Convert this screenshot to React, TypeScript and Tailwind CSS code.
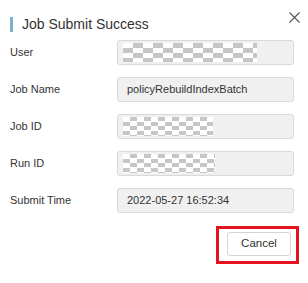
import type { ReactNode } from 'react';

interface FieldProps {
    label: string;
    children?: ReactNode;
}

const Field = ({ label, children }: FieldProps) => (
    <div className="flex items-center h-[25px]">
        <div className="w-[107px] text-[11px] text-[#333]">{label}</div>
        <div className="flex items-center w-[177px] h-[25px] border border-[#d9d9d9] rounded-[3px] bg-[#f0f0f0]">
            {children}
        </div>
    </div>
);

// redacted value, shown as a grey mosaic
const Mosaic = ({ width, cell }: { width: string; cell: string }) => (
    <div
        className={`ml-[5px] h-[19px] bg-[repeating-conic-gradient(#c6c6c6_0_25%,#ffffff_0_50%)] ${width} ${cell}`}
    />
);

const Value = ({ text }: { text: string }) => (
    <span className="pl-[9px] text-[11px] text-[#333]">{text}</span>
);

export default function App() {
    return (
        <div className="relative w-[308px] h-[283px] bg-white font-['Liberation_Sans',Arial,sans-serif] text-[#333]">
            {/* Header */}
            <div className="flex justify-between pl-[10px] pr-[8px] pt-[12px]">
                <div className="flex items-center mt-[4px] h-[16px]">
                    <span className="w-[3px] h-[15px] bg-[#7db3ca]" />
                    <span className="ml-[9px] text-[14px] leading-[16px] text-[#333]">Job Submit Success</span>
                </div>
                <svg width="11" height="11" viewBox="0 0 11 11">
                    <path d="M0.5 0.5 L10.5 10.5 M10.5 0.5 L0.5 10.5" stroke="#555" strokeWidth="1.1" fill="none" />
                </svg>
            </div>

            {/* Fields */}
            <div className="flex flex-col gap-[12px] pl-[10px] mt-[8px]">
                <Field label="User">
                    <Mosaic width="w-[134px]" cell="bg-[length:20px_10px]" />
                </Field>
                <Field label="Job Name">
                    <Value text="policyRebuildIndexBatch" />
                </Field>
                <Field label="Job ID">
                    <Mosaic width="w-[90px]" cell="bg-[length:14px_9px]" />
                </Field>
                <Field label="Run ID">
                    <Mosaic width="w-[92px]" cell="bg-[length:14px_9px]" />
                </Field>
                <Field label="Submit Time">
                    <Value text="2022-05-27 16:52:34" />
                </Field>
            </div>

            {/* Footer */}
            <div className="flex justify-end pr-[17px] mt-[19px]">
                <button
                    type="button"
                    className="w-[64px] h-[24px] border border-[#d4d4d4] rounded-[3px] bg-white text-[11.5px] text-[#333]"
                >
                    Cancel
                </button>
            </div>

            {/* highlight annotation */}
            <div className="absolute left-[216px] top-[226px] w-[83px] h-[38px] border-[3px] border-[#e5141c]" />
        </div>
    );
}
